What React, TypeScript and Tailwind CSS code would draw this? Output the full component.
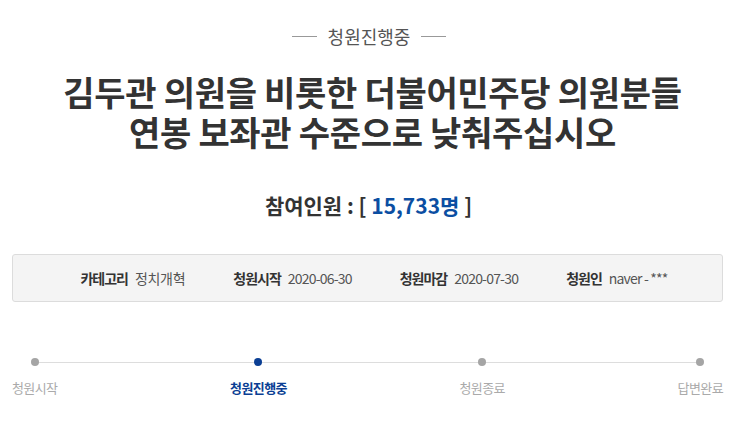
const font = { fontFamily: '"Noto Sans CJK KR", "Noto Sans", sans-serif' }

const steps = [
  { label: '청원시작', active: false },
  { label: '청원진행중', active: true },
  { label: '청원종료', active: false },
  { label: '답변완료', active: false },
]

const info = [
  { label: '카테고리', value: '정치개혁', num: false },
  { label: '청원시작', value: '2020-06-30', num: true },
  { label: '청원마감', value: '2020-07-30', num: true },
  { label: '청원인', value: 'naver - ***', num: true },
]

export default function App() {
  return (
    <div className="w-[745px] h-[423px] bg-white overflow-hidden pt-[25px]" style={font}>
      {/* status */}
      <div className="flex items-center justify-center gap-[11px] pr-[7px] text-[18px] leading-[22px] text-[#555]">
        <span className="w-[25px] h-px bg-[#999]" />
        <span>청원진행중</span>
        <span className="w-[25px] h-px bg-[#999]" />
      </div>

      {/* title */}
      <h1 className="mt-[25px] text-center text-[34px] leading-[40px] font-bold text-[#333] tracking-[-0.3px]">
        김두관 의원을 비롯한 더불어민주당 의원분들
        <br />
        연봉 보좌관 수준으로 낮춰주십시오
      </h1>

      {/* count */}
      <p className="mt-[39px] pr-[8px] text-center text-[21px] leading-[28px] font-bold text-[#333]">
        참여인원 : [ <span className="text-[#0b4ea2]">15,733명</span> ]
      </p>

      {/* info box */}
      <div className="mt-[35px] ml-3 mr-[22px] h-[48px] pl-[13px] flex items-center justify-center gap-[48px] rounded-[3px] border border-[#dcdcdc] bg-[#f4f4f4]">
        {info.map((i) => (
          <div key={i.label} className="flex items-center gap-[7px] text-[14px]">
            <span className="font-bold text-[#333] tracking-[-1px]">{i.label}</span>
            <span className={'text-[#555] ' + (i.num ? 'tracking-[-0.8px]' : 'tracking-[-0.3px]')}>{i.value}</span>
          </div>
        ))}
      </div>

      {/* progress */}
      <div className="relative mt-[56px] ml-3 mr-[22px] flex justify-between">
        <div className="absolute left-[23px] right-[23px] top-[3.5px] h-px bg-[#ddd]" />
        {steps.map((s) => (
          <div key={s.label} className="relative flex flex-col items-center">
            <span className={'w-2 h-2 rounded-full ' + (s.active ? 'bg-[#0b3f94]' : 'bg-[#a5a5a5]')} />
            <span
              className={
                'mt-[13px] text-[13px] leading-[18px] tracking-[-0.6px] ' +
                (s.active ? 'font-bold text-[#0b3f94]' : 'text-[#aaa]')
              }
            >
              {s.label}
            </span>
          </div>
        ))}
      </div>
    </div>
  )
}
